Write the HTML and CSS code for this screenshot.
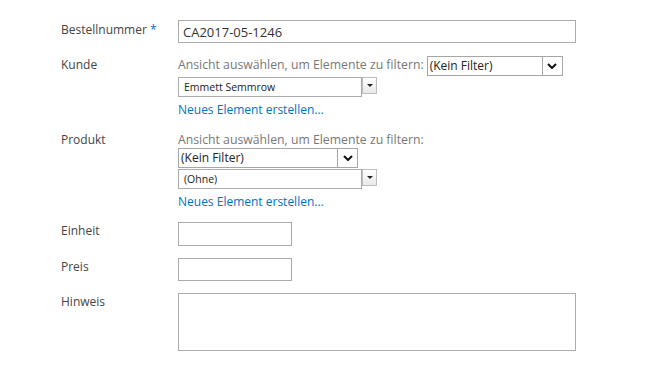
FILE: index.html
```html
<!DOCTYPE html>
<html lang="de">
<head>
<meta charset="utf-8">
<title>Bestellung</title>
<link rel="stylesheet" href="styles.css">
</head>
<body>
<div class="form">
  <div class="row r1">
    <div class="label">Bestellnummer <span class="req">*</span></div>
    <div class="field">
      <div class="input wide"><span class="val">CA2017-05-1246</span></div>
    </div>
  </div>

  <div class="row r2">
    <div class="label">Kunde</div>
    <div class="field">
      <div class="line">
        <span class="hint">Ansicht auswählen, um Elemente zu filtern:</span>
        <div class="select sel-a"><span class="sel-text">(Kein Filter)</span><span class="sel-arrow"><svg width="10" height="6" viewBox="0 0 10 6"><path d="M1 1 L5 5 L9 1" fill="none" stroke="#111" stroke-width="2"/></svg></span></div>
      </div>
      <div class="combo"><div class="combo-input">Emmett Semmrow</div><div class="combo-btn"><span class="tri"></span></div></div>
      <a class="link" href="#">Neues Element erstellen...</a>
    </div>
  </div>

  <div class="row r3">
    <div class="label">Produkt</div>
    <div class="field">
      <div class="hint block">Ansicht auswählen, um Elemente zu filtern:</div>
      <div class="select sel-b"><span class="sel-text">(Kein Filter)</span><span class="sel-arrow"><svg width="10" height="6" viewBox="0 0 10 6"><path d="M1 1 L5 5 L9 1" fill="none" stroke="#111" stroke-width="2"/></svg></span></div>
      <div class="combo"><div class="combo-input">(Ohne)</div><div class="combo-btn"><span class="tri"></span></div></div>
      <a class="link" href="#">Neues Element erstellen...</a>
    </div>
  </div>

  <div class="row r4">
    <div class="label">Einheit</div>
    <div class="field"><div class="input small tall"></div></div>
  </div>

  <div class="row r5">
    <div class="label">Preis</div>
    <div class="field"><div class="input small"></div></div>
  </div>

  <div class="row r6">
    <div class="label">Hinweis</div>
    <div class="field"><div class="textarea"></div></div>
  </div>
</div>
</body>
</html>
```
FILE: styles.css
```css
html, body {
  margin: 0;
  padding: 0;
  background: #fff;
}
body {
  font-family: "Open Sans", "Noto Sans", sans-serif;
  font-size: 12px;
  color: #444;
}
.form {
  padding: 20px 0 0 61px;
  display: flex;
  flex-direction: column;
  gap: 12px;
}
.row {
  display: grid;
  grid-template-columns: 117px 398px;
  align-items: start;
}
.label {
  line-height: 18px;
  color: #444;
  white-space: nowrap;
}
.r1 .label { padding-top: 1px; }
.r2 .label, .r3 .label { padding-top: 1px; }
.req { color: #0072c6; }
.field {
  display: flex;
  flex-direction: column;
  align-items: flex-start;
}
.input {
  box-sizing: border-box;
  border: 1px solid #ababab;
  background: #fff;
  display: flex;
  align-items: center;
}
.input.wide { width: 398px; height: 23px; }
.input.small { width: 114px; height: 23px; }
.input.tall { height: 24px; }
.val {
  padding-left: 4px;
  font-size: 13px;
  color: #333;
}
.line {
  display: flex;
  align-items: flex-start;
  height: 21px;
}
.hint {
  color: #777;
  font-size: 12.25px;
  line-height: 18px;
  padding-top: 1px;
  white-space: nowrap;
}
.hint.block { height: 17px; }
.select {
  box-sizing: border-box;
  border: 1px solid #a6a6a6;
  height: 20px;
  display: flex;
  align-items: stretch;
  background: #fff;
}
.sel-a { width: 136px; margin-left: 3px; margin-top: 1px; }
.sel-b { width: 180px; }
.sel-text {
  flex: 1;
  padding-left: 2px;
  font-size: 12px;
  line-height: 18px;
  color: #222;
  white-space: nowrap;
}
.sel-arrow {
  width: 19px;
  border-left: 1px solid #a6a6a6;
  display: flex;
  align-items: center;
  justify-content: center;
  background: #fff;
}
.combo {
  display: flex;
  align-items: flex-start;
  margin-top: 1px;
}
.combo-input {
  box-sizing: border-box;
  width: 184px;
  height: 20px;
  border: 1px solid #ababab;
  font-size: 10.5px;
  line-height: 18px;
  padding-left: 5px;
  color: #222;
  white-space: nowrap;
}
.combo-btn {
  box-sizing: border-box;
  width: 15px;
  height: 17px;
  border: 1px solid #bdbdbd;
  background: linear-gradient(#ffffff, #e9e9e9);
  display: flex;
  align-items: center;
  justify-content: center;
}
.tri {
  width: 0;
  height: 0;
  border-left: 3px solid transparent;
  border-right: 3px solid transparent;
  border-top: 3px solid #222;
}
.link {
  margin-top: 4px;
  line-height: 17px;
  color: #0072c6;
  text-decoration: none;
  white-space: nowrap;
}
.textarea {
  box-sizing: border-box;
  width: 398px;
  height: 58px;
  border: 1px solid #ababab;
  background: #fff;
}
```
